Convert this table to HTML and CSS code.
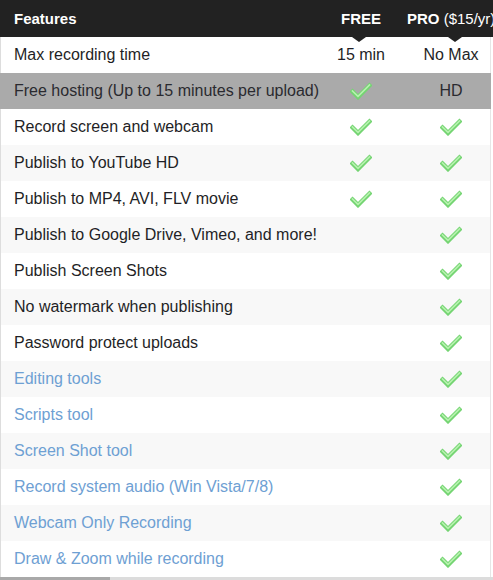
FILE: index.html
```html
<!DOCTYPE html>
<html>
<head>
<meta charset="utf-8">
<link rel="stylesheet" href="styles.css">
</head>
<body>
<svg width="0" height="0" class="defs">
  <symbol id="chk" viewBox="0 0 22 18">
    <polyline points="2.5,9.5 8,15 19.5,3.5" fill="none" stroke="#74d472" stroke-width="4.4" stroke-linejoin="miter" stroke-linecap="square"/>
    <polyline points="2.5,9 8,14.3 19.5,3" fill="none" stroke="#b6f2ae" stroke-width="1.6" stroke-linecap="square"/>
  </symbol>
</svg>
<div class="table">
  <div class="head">
    <div class="c1">Features</div>
    <div class="c2 tip">FREE</div>
    <div class="c3 tip"><b>PRO</b> ($15/yr)</div>
  </div>
  <div class="row white"><div class="c1">Max recording time</div><div class="c2">15 min</div><div class="c3">No Max</div></div>
  <div class="row gray"><div class="c1">Free hosting (Up to 15 minutes per upload)</div><div class="c2"><svg class="ck"><use href="#chk"/></svg></div><div class="c3">HD</div></div>
  <div class="row white"><div class="c1">Record screen and webcam</div><div class="c2"><svg class="ck"><use href="#chk"/></svg></div><div class="c3"><svg class="ck"><use href="#chk"/></svg></div></div>
  <div class="row light"><div class="c1">Publish to YouTube HD</div><div class="c2"><svg class="ck"><use href="#chk"/></svg></div><div class="c3"><svg class="ck"><use href="#chk"/></svg></div></div>
  <div class="row white"><div class="c1">Publish to MP4, AVI, FLV movie</div><div class="c2"><svg class="ck"><use href="#chk"/></svg></div><div class="c3"><svg class="ck"><use href="#chk"/></svg></div></div>
  <div class="row light"><div class="c1">Publish to Google Drive, Vimeo, and more!</div><div class="c2"></div><div class="c3"><svg class="ck"><use href="#chk"/></svg></div></div>
  <div class="row white"><div class="c1">Publish Screen Shots</div><div class="c2"></div><div class="c3"><svg class="ck"><use href="#chk"/></svg></div></div>
  <div class="row light"><div class="c1">No watermark when publishing</div><div class="c2"></div><div class="c3"><svg class="ck"><use href="#chk"/></svg></div></div>
  <div class="row white"><div class="c1">Password protect uploads</div><div class="c2"></div><div class="c3"><svg class="ck"><use href="#chk"/></svg></div></div>
  <div class="row light blue"><div class="c1">Editing tools</div><div class="c2"></div><div class="c3"><svg class="ck"><use href="#chk"/></svg></div></div>
  <div class="row white blue"><div class="c1">Scripts tool</div><div class="c2"></div><div class="c3"><svg class="ck"><use href="#chk"/></svg></div></div>
  <div class="row light blue"><div class="c1">Screen Shot tool</div><div class="c2"></div><div class="c3"><svg class="ck"><use href="#chk"/></svg></div></div>
  <div class="row white blue"><div class="c1">Record system audio (Win Vista/7/8)</div><div class="c2"></div><div class="c3"><svg class="ck"><use href="#chk"/></svg></div></div>
  <div class="row light blue"><div class="c1">Webcam Only Recording</div><div class="c2"></div><div class="c3"><svg class="ck"><use href="#chk"/></svg></div></div>
  <div class="row white blue"><div class="c1">Draw &amp; Zoom while recording</div><div class="c2"></div><div class="c3"><svg class="ck"><use href="#chk"/></svg></div></div>
</div>
<div class="scroll"><div class="thumb"></div></div>
</body>
</html>
```
FILE: styles.css
```css
html, body {
  margin: 0;
  padding: 0;
  overflow: hidden;
  background: #ffffff;
}
body {
  font-family: "Liberation Sans", Arial, sans-serif;
  width: 493px;
}
.defs {
  position: absolute;
  width: 0;
  height: 0;
}
.table {
  width: 491px;
}
.head {
  display: grid;
  grid-template-columns: 316px 90px 90px;
  align-items: center;
  height: 37px;
  width: 493px;
  background: #222222;
  color: #ffffff;
  font-size: 15px;
  font-weight: bold;
  position: relative;
  z-index: 1;
  overflow: visible;
}
.head .c1 {
  padding-left: 14px;
}
.head .c2, .head .c3 {
  text-align: center;
  white-space: nowrap;
}
.head .c3 {
  font-weight: normal;
  text-align: left;
  padding-left: 1px;
}
.head .c3 b {
  font-weight: bold;
}
.tip {
  position: relative;
  height: 100%;
  line-height: 37px;
}
.tip::after {
  content: "";
  position: absolute;
  left: 50%;
  bottom: -5px;
  margin-left: -9px;
  border-left: 7px solid transparent;
  border-right: 7px solid transparent;
  border-top: 5px solid #222222;
}
.head .c3.tip::after {
  margin-left: -3px;
}
.row {
  display: grid;
  grid-template-columns: 315px 90px 90px;
  align-items: center;
  height: 36px;
  border-left: 1px solid #dddddd;
  border-right: 1px solid #e6e6e6;
  font-size: 16px;
  color: #1f1f26;
}
.row .c1 {
  padding-left: 13px;
  white-space: nowrap;
}
.row .c2, .row .c3 {
  text-align: center;
  display: flex;
  justify-content: center;
  align-items: center;
}
.white {
  background: #ffffff;
}
.light {
  background: #f8f8f8;
}
.gray {
  background: #aaaaaa;
  border-left-color: #aaaaaa;
  border-right-color: #aaaaaa;
  color: #2a2a30;
}
.blue .c1 {
  color: #6ea0d3;
}
.ck {
  width: 22px;
  height: 18px;
}
.scroll {
  height: 10px;
  background: #dcdcdc;
}
.thumb {
  width: 110px;
  height: 100%;
  background: #a9a9a9;
}
```
